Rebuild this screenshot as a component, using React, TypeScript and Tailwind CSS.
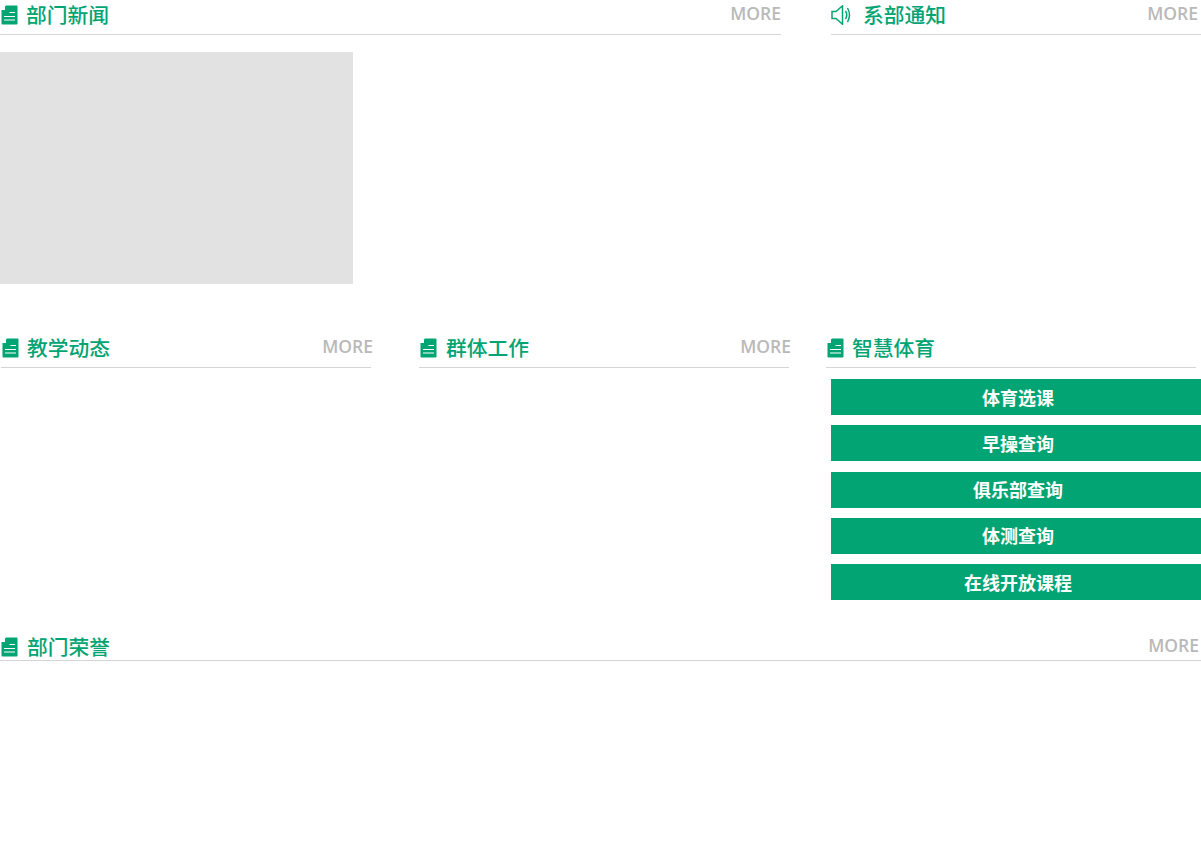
import React from "react";

const font = "font-['Noto_Sans_CJK_SC','Noto_Sans',sans-serif]";

function DocIcon() {
  return (
    <svg width="17" height="20" viewBox="0 0 17 20" className="shrink-0">
      <path d="M5 .5H15.500A1 1 0 0 1 16.500 1.500V18.500A1 1 0 0 1 15.500 19.500H1.500A1 1 0 0 1 .5 18.500V5H4V1.500Z" fill="#03a473" />
      <path d="M8.500 7.500H14M3 11.500H14M3 15H14" stroke="#fff" strokeWidth="1.200" />
    </svg>
  );
}

function SpeakerIcon() {
  return (
    <svg width="21" height="20" viewBox="0 0 21 20" fill="none" stroke="#03a473" strokeWidth="1.500" className="shrink-0">
      <path d="M1 6.500H5L11.500 .8V19.200L5 13.500H1Z" />
      <path d="M14.500 6Q17 10 14.500 14M16.500 3Q20.500 10 16.500 17" />
    </svg>
  );
}

function Header({ title, icon, more = true, className = "" }: { title: string; icon?: React.ReactNode; more?: boolean; className?: string }) {
  return (
    <div className={`flex items-center border-b border-[#d5d5d5] ${className}`}>
      {icon ?? <DocIcon />}
      <span className={`text-[20.750px] leading-none font-medium text-[#03a473] ${font}`}>{title}</span>
      {more && <span className="ml-auto mt-[-1px] text-[17.500px] leading-none font-semibold text-[#b9b9b9] font-['Open_Sans',sans-serif]">MORE</span>}
    </div>
  );
}

const buttons = ["体育选课", "早操查询", "俱乐部查询", "体测查询", "在线开放课程"];

export default function App() {
  return (
    <div className="w-[1201px] h-[864px] bg-white overflow-hidden">
      <div className="flex justify-between">
        <div className="w-[781px]">
          <Header title="部门新闻" className="h-[35px] gap-[8px] pl-px pb-[5px]" />
          <div className="w-[353px] h-[232px] mt-[17px] bg-[#e2e2e2]" />
        </div>
        <Header title="系部通知" icon={<SpeakerIcon />} className="w-[370px] h-[35px] gap-[11px] pr-[3px] pb-[5px] self-start" />
      </div>
      <div className="flex mt-[49px]">
        <Header title="教学动态" className="w-[370px] ml-px h-[35px] gap-[8px] pl-px pb-[5px] self-start [&>span:last-child]:mr-[-2px]" />
        <Header title="群体工作" className="w-[370px] ml-[48px] h-[35px] gap-[9px] pl-px pb-[5px] self-start [&>span:last-child]:mr-[-2px]" />
        <div className="w-[375px] ml-[37px]">
          <Header title="智慧体育" more={false} className="w-[370px] h-[35px] gap-[8px] pl-px pb-[5px]" />
          <div className="flex flex-col gap-[10.250px] mt-[11px] ml-[5px]">
            {buttons.map((b) => (
              <div key={b} className={`h-[36px] flex items-center justify-center pl-[4px] bg-[#03a473] text-white text-[18px] font-bold ${font}`}>{b}</div>
            ))}
          </div>
        </div>
      </div>
      <Header title="部门荣誉" className="h-[31px] mt-[30px] gap-[9px] pl-px pr-[2px] pt-[3px]" />
    </div>
  );
}
